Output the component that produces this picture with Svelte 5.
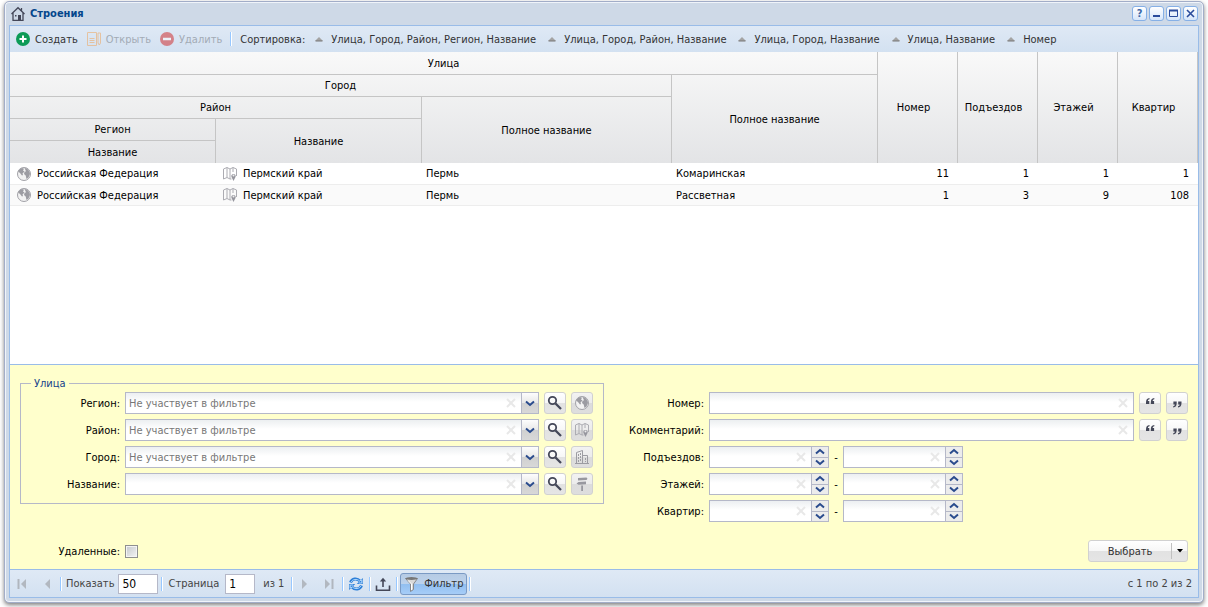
<script lang="ts">
  type Building = {
    region: string;
    district: string;
    city: string;
    street: string;
    counts: number[];
  };

  const sortings = [
    'Улица, Город, Район, Регион, Название',
    'Улица, Город, Район, Название',
    'Улица, Город, Название',
    'Улица, Название',
    'Номер'
  ];
  const countColumns = ['Номер', 'Подъездов', 'Этажей', 'Квартир'];
  const rows: Building[] = [
    { region: 'Российская Федерация', district: 'Пермский край', city: 'Пермь', street: 'Комаринская', counts: [11, 1, 1, 1] },
    { region: 'Российская Федерация', district: 'Пермский край', city: 'Пермь', street: 'Рассветная', counts: [1, 3, 9, 108] }
  ];

  const combos = [
    { id: 'region', label: 'Регион', empty: 'Не участвует в фильтре', icon: 'globe' },
    { id: 'district', label: 'Район', empty: 'Не участвует в фильтре', icon: 'map' },
    { id: 'city', label: 'Город', empty: 'Не участвует в фильтре', icon: 'city' },
    { id: 'street', label: 'Название', empty: '', icon: 'sign' }
  ];
  const texts = [
    { id: 'number', label: 'Номер' },
    { id: 'comment', label: 'Комментарий' }
  ];
  const ranges = [
    { id: 'entrances', label: 'Подъездов' },
    { id: 'floors', label: 'Этажей' },
    { id: 'flats', label: 'Квартир' }
  ];

  let filterText = $state<Record<string, string>>({ number: '', comment: '' });
  let filterRange = $state<Record<string, string>>({});
  let removed = $state(false);
  let showFilter = $state(true);
  let pageSize = $state('50');
  let page = $state('1');

  function step(key: string, delta: number) {
    const next = Math.max(0, (Number(filterRange[key]) || 0) + delta);
    filterRange[key] = String(next);
  }
</script>

{#snippet icon(name: string)}
  <svg class="icon" width="16" height="16" viewBox="0 0 16 16" fill="none" aria-hidden="true">
    {#if name === 'home'}
      <path d="M1.500 8 8 1.700 14.500 8M3 7v7.300h10V7M11.500 2v3" stroke="#444758" stroke-width="1.300" />
      <path d="M8 9h3v5H8zM5 9h1.500v1.500H5z" fill="#444758" />
    {:else if name === 'add'}
      <circle cx="8" cy="8" r="7" fill="#0d9b57" />
      <path d="M8 4.500v7M4.500 8h7" stroke="#fff" stroke-width="2" />
    {:else if name === 'open'}
      <path d="M1.500 1.500h9v13h-9zM3.500 7.500h5M3.500 9.500h5M3.500 11.500h5" stroke="#f0a050" />
      <path d="M12 2h2.500v10l-1.200 2L12 12z" stroke="#f0a050" />
    {:else if name === 'remove'}
      <circle cx="8" cy="8" r="7" fill="#d02020" />
      <path d="M4 8h8" stroke="#fff" stroke-width="2.500" />
    {:else if name === 'asc'}
      <path d="M4 10 8 6l4 4z" fill="#a4a4a4" />
      <path d="M4.500 10h7" stroke="#777" />
    {:else if name === 'globe'}
      <circle cx="8" cy="8" r="6.500" fill="#f2f2f2" stroke="#a2a2a8" />
      <path d="M2 5.500C3 3.500 4.500 2.500 6 2l2 .8L7 4.500 8.500 5.500 6.500 7.500l.5 1.500-1 .5-2-2.500zM8.500 2 11 2.500l2.500 3L14 8l-1.500 3.500-2 1.500-.8-3.500L8 8l.5-2 1.500-.8z" fill="#9c9ca2" />
    {:else if name === 'map'}
      <path d="M1.500 3 5 1.500 8 3l3-1.500L14.500 3v7M1.500 3v10L5 11.500 8 13h1.500M5 1.500v10M8 3v10M11 1.500V6" stroke="#acacb2" />
      <path d="M11.500 15 9.500 11a2.200 2.200 0 1 1 4 0z" fill="#96969e" />
      <circle cx="11.500" cy="9.500" r="1" fill="#eee" />
    {:else if name === 'city'}
      <path d="M2.500 14.500V3.500L8.500 1.500v13M8.500 6.500h5v8M1 14.500h14" stroke="#9c9ca2" />
      <path d="M4.500 5v8M6.500 4v9M11.500 9v4" stroke="#9c9ca2" stroke-dasharray="2 1" />
    {:else if name === 'sign'}
      <path d="M4 2 12.500 1.500 13.500 2.700 12.500 4 4 4.500zM12 5.500 4.500 6 2.500 7.500l2 1.200L12 8.200zM7.200 9.500h1.800V15H7.200z" fill="#98989f" />
    {:else if name === 'search'}
      <circle cx="5.500" cy="5.500" r="3.700" stroke="#444758" stroke-width="1.800" />
      <path d="m8.500 8.500 5.500 5.500" stroke="#444758" stroke-width="2.300" />
    {:else if name === 'open-quote'}
      <path d="M7.500 3C5 3.200 4 4.700 4 7.500V9h3.300V6H5.900c0-1 .5-1.500 1.600-1.700zM12.300 3C9.800 3.200 8.800 4.700 8.800 7.500V9h3.300V6h-1.400c0-1 .5-1.500 1.600-1.700z" fill="#444758" />
    {:else if name === 'close-quote'}
      <path d="M4.200 12.500c2.500-.2 3.500-1.700 3.500-4.500V6.500H4.400v3h1.400c0 1-.5 1.500-1.600 1.700zM9 12.500c2.500-.2 3.500-1.700 3.500-4.500V6.500H9.200v3h1.400c0 1-.5 1.500-1.600 1.700z" fill="#444758" />
    {:else if name === 'first'}
      <path d="M3.500 3v10" stroke="#b0b6be" stroke-width="2" />
      <path d="M11 3v10L6 8z" fill="#b2b8c0" />
    {:else if name === 'prev'}
      <path d="M11 3v10L6 8z" fill="#b2b8c0" />
    {:else if name === 'next'}
      <path d="M5 3v10l5-5z" fill="#b2b8c0" />
    {:else if name === 'last'}
      <path d="M11.500 3v10" stroke="#b0b6be" stroke-width="2" />
      <path d="M4 3v10l5-5z" fill="#b2b8c0" />
    {:else if name === 'refresh'}
      <path d="M2.500 6.500C4 2.500 9 1.800 12 5M13.500 9.500C12 13.500 7 14.200 4 11" stroke="#2c7fd8" stroke-width="3" />
      <path d="M14.800 2v6H8.800zM1.200 14V8h6z" fill="#2c7fd8" />
      <path d="M3 6.200C4.500 3 9 2.500 11.500 5L13.800 4v3h-3M13 9.800C11.500 13 7 13.500 4.500 11L2.200 12V9h3" stroke="#b5dafc" />
    {:else if name === 'export'}
      <path d="M1.500 9.500v4.700h13V9.500M8 11V4" stroke="#444758" stroke-width="1.600" />
      <path d="M4.800 5.500 8 1.800l3.200 3.700z" fill="#444758" />
    {:else if name === 'funnel'}
      <path d="M1.500 2.500h12L9.500 8v5.500l-3 2V8z" fill="#d8d8d8" stroke="#85888c" />
      <ellipse cx="7.500" cy="2.500" rx="6" ry="1.500" fill="#777" />
      <path d="M4 4.500 7.500 8v6" stroke="#fff" />
    {/if}
  </svg>
{/snippet}

{#snippet chevron(up: boolean)}
  <svg width="10" height="7" viewBox="0 0 10 7" fill="none" aria-hidden="true">
    <path d={up ? 'M1 5.500 5 2l4 3.500' : 'M1 1.500 5 5l4-3.500'} stroke="#2a4b8d" stroke-width="2" />
  </svg>
{/snippet}

{#snippet clear()}
  <button type="button" class="clear" aria-label="Очистить">
    <svg width="10" height="10" viewBox="0 0 10 10"><path d="m1 1 8 8m0-8L1 9" stroke="#e8e8e8" stroke-width="2" /></svg>
  </button>
{/snippet}

{#snippet spinner(key: string, label: string)}
  <div class="field spinner">
    <input id={key} aria-label={label} inputmode="numeric" bind:value={filterRange[key]} />
    {@render clear()}
    <div class="spin">
      <button type="button" aria-label="Больше" onclick={() => step(key, 1)}>{@render chevron(true)}</button>
      <button type="button" aria-label="Меньше" onclick={() => step(key, -1)}>{@render chevron(false)}</button>
    </div>
  </div>
{/snippet}

<main class="window">
  <header class="title">
    {@render icon('home')}
    <h1>Строения</h1>
    <div class="tools">
      <button type="button" aria-label="Справка"><b>?</b></button>
      <button type="button" aria-label="Свернуть">
        <svg width="13" height="13"><path d="M3 9h7" stroke="#2a4b9b" stroke-width="2" /></svg>
      </button>
      <button type="button" aria-label="Развернуть">
        <svg width="13" height="13" fill="none"><path d="M2.500 3v6.500h8V3" stroke="#2a4b9b" /><path d="M2 3.500h9" stroke="#2a4b9b" stroke-width="2" /></svg>
      </button>
      <button type="button" aria-label="Закрыть">
        <svg width="13" height="13"><path d="m3 3 7 7m0-7-7 7" stroke="#2a4b9b" stroke-width="1.600" /></svg>
      </button>
    </div>
  </header>

  <div class="content">
    <div class="toolbar top">
      <button type="button" class="tool">{@render icon('add')}Создать</button>
      <button type="button" class="tool" disabled>{@render icon('open')}Открыть</button>
      <button type="button" class="tool" disabled>{@render icon('remove')}Удалить</button>
      <span class="sep"></span>
      <span class="caption">Сортировка:</span>
      {#each sortings as sorting}
        <button type="button" class="tool">{@render icon('asc')}{sorting}</button>
      {/each}
    </div>

    <div class="grid">
      <table>
        <colgroup>
          <col class="w-name" />
          <col class="w-name" />
          <col class="w-city" />
          <col class="w-name" />
          <col class="w-count" span="4" />
        </colgroup>
        <thead>
          <tr>
            <th colspan="4">Улица</th>
            {#each countColumns as column}
              <th rowspan="5" class="count">{column}</th>
            {/each}
          </tr>
          <tr>
            <th colspan="3">Город</th>
            <th rowspan="4">Полное название</th>
          </tr>
          <tr>
            <th colspan="2">Район</th>
            <th rowspan="3">Полное название</th>
          </tr>
          <tr>
            <th>Регион</th>
            <th rowspan="2">Название</th>
          </tr>
          <tr>
            <th>Название</th>
          </tr>
        </thead>
        <tbody>
          {#each rows as row}
            <tr>
              <td><div class="place">{@render icon('globe')}{row.region}</div></td>
              <td><div class="place">{@render icon('map')}{row.district}</div></td>
              <td>{row.city}</td>
              <td>{row.street}</td>
              {#each row.counts as count}
                <td class="num">{count}</td>
              {/each}
            </tr>
          {/each}
        </tbody>
      </table>
    </div>

    {#if showFilter}
      <form class="filter" onsubmit={(e) => e.preventDefault()}>
        <div class="columns">
          <fieldset>
            <legend>Улица</legend>
            {#each combos as combo}
              <div class="row">
                <label for={combo.id}>{combo.label}:</label>
                <div class="field">
                  <select id={combo.id}>
                    <option value="">{combo.empty}</option>
                  </select>
                  {@render clear()}
                  <span class="trigger">{@render chevron(false)}</span>
                </div>
                <button type="button" class="square" aria-label="Найти">{@render icon('search')}</button>
                <button type="button" class="square off" aria-label={combo.label} disabled>{@render icon(combo.icon)}</button>
              </div>
            {/each}
          </fieldset>

          <div class="right">
            {#each texts as text}
              <div class="row">
                <label for={text.id}>{text.label}:</label>
                <div class="field">
                  <input id={text.id} bind:value={filterText[text.id]} />
                  {@render clear()}
                </div>
                <button type="button" class="square" aria-label="Начинается с">{@render icon('open-quote')}</button>
                <button type="button" class="square" aria-label="Заканчивается на">{@render icon('close-quote')}</button>
              </div>
            {/each}
            {#each ranges as range}
              <div class="row">
                <label for="{range.id}-from">{range.label}:</label>
                {@render spinner(`${range.id}-from`, `${range.label} от`)}
                <span class="dash">-</span>
                {@render spinner(`${range.id}-to`, `${range.label} до`)}
              </div>
            {/each}
          </div>
        </div>

        <div class="footer">
          <label for="removed">Удаленные:</label>
          <input id="removed" type="checkbox" bind:checked={removed} />
          <div class="split">
            <button type="submit">Выбрать</button>
            <button type="button" class="arrow" aria-label="Ещё">
              <svg width="6" height="4" viewBox="0 0 6 4"><path d="M0 0h6L3 3.500z" fill="#000" /></svg>
            </button>
          </div>
        </div>
      </form>
    {/if}

    <div class="toolbar paging">
      <button type="button" class="nav" aria-label="Первая страница" disabled>{@render icon('first')}</button>
      <button type="button" class="nav" aria-label="Предыдущая страница" disabled>{@render icon('prev')}</button>
      <span class="sep"></span>
      <label for="page-size">Показать</label>
      <input id="page-size" class="size" bind:value={pageSize} />
      <span class="sep"></span>
      <label for="page">Страница</label>
      <input id="page" class="page" bind:value={page} />
      <span class="of">из 1</span>
      <span class="sep"></span>
      <button type="button" class="nav" aria-label="Следующая страница" disabled>{@render icon('next')}</button>
      <button type="button" class="nav" aria-label="Последняя страница" disabled>{@render icon('last')}</button>
      <span class="sep"></span>
      <button type="button" class="nav" aria-label="Обновить">{@render icon('refresh')}</button>
      <span class="sep"></span>
      <button type="button" class="nav" aria-label="Выгрузить">{@render icon('export')}</button>
      <span class="sep"></span>
      <button type="button" class="toggle" aria-pressed={showFilter} onclick={() => (showFilter = !showFilter)}>
        {@render icon('funnel')}Фильтр
      </button>
      <span class="sep"></span>
      <span class="status">с 1 по 2 из 2</span>
    </div>
  </div>
</main>

<style>
  :global(body) {
    margin: 0;
    background: #fff;
  }

  .window {
    box-sizing: border-box;
    display: flex;
    flex-direction: column;
    min-height: calc(100vh - 5px);
    margin: 1px 4px 4px;
    padding: 0 4px 4px;
    border: 1px solid #a2adc8;
    border-radius: 5px;
    background: #ced9e7;
    box-shadow:
      inset 0 0 0 1px #f0f4fa,
      0 2px 4px rgba(0, 0, 0, 0.5);
    font: 11px/15px 'DejaVu Sans Condensed', 'DejaVu Sans', sans-serif;
    color: #000;
  }
  .window * {
    box-sizing: border-box;
  }
  .icon {
    flex: none;
    display: block;
  }
  button,
  input,
  select {
    margin: 0;
    padding: 0;
    border: 0;
    background: none;
    font: inherit;
    color: inherit;
  }
  button {
    display: flex;
    align-items: center;
    justify-content: center;
  }

  .title {
    display: flex;
    align-items: center;
    gap: 4px;
    height: 23px;
    padding: 0 1px;
  }
  h1 {
    margin: 0;
    font-size: 11px;
    line-height: 15px;
    color: #04468c;
  }
  .tools {
    display: flex;
    gap: 2px;
    margin-left: auto;
  }
  .tools button {
    width: 15px;
    height: 15px;
    border: 1px solid #86b0e6;
    border-radius: 3px;
    background: linear-gradient(#fff, #d5e5fa);
    color: #3c69a8;
  }

  .content {
    flex: 1;
    display: flex;
    flex-direction: column;
    border: 1px solid #99bce8;
  }
  .toolbar {
    display: flex;
    align-items: center;
    background: linear-gradient(#dfe9f5, #d3e1f1);
    color: #333;
    white-space: nowrap;
  }
  .top {
    height: 26px;
    padding-left: 5px;
  }
  .tool {
    gap: 4px;
    margin-right: 8px;
  }
  .tool:disabled {
    color: #a3abb5;
  }
  .tool:disabled .icon {
    opacity: 0.5;
  }
  .sep {
    flex: none;
    width: 2px;
    height: 14px;
    border-left: 1px solid #98c8ff;
    border-right: 1px solid #fff;
  }
  .caption {
    margin: 0 6px 0 8px;
  }

  .grid {
    flex: 1;
    min-height: 240px;
    background: #fff;
  }
  table {
    width: 100%;
    table-layout: fixed;
    border-collapse: separate;
    border-spacing: 0;
  }
  .w-name {
    width: 206px;
  }
  .w-city {
    width: 250px;
  }
  .w-count {
    width: 80px;
  }
  thead {
    background: linear-gradient(#f9f9f9, #e3e4e6);
  }
  th {
    height: 22px;
    padding: 0;
    border: solid #c5c5c5;
    border-width: 0 1px 1px 0;
    font-weight: normal;
  }
  thead tr:first-child th {
    height: 23px;
  }
  .count,
  th[rowspan],
  tr:last-child th {
    border-bottom: 0;
  }
  .count {
    padding-right: 8px;
  }
  td {
    height: 21px;
    padding: 0 4px;
    border-bottom: 1px solid #ededed;
  }
  tbody tr:first-child td {
    height: 22px;
  }
  tbody tr:nth-child(even) {
    background: #fafafa;
  }
  .place {
    display: flex;
    align-items: center;
    gap: 5px;
    padding-left: 2px;
  }
  .num {
    padding-right: 9px;
    text-align: right;
  }

  .filter {
    padding: 11px 10px 7px;
    border-top: 1px solid #99bce8;
    border-bottom: 1px solid #99bce8;
    background: #ffc;
  }
  .columns {
    display: grid;
    grid-template-columns: 1fr 1fr;
  }
  fieldset {
    align-self: start;
    min-width: 0;
    margin: 0;
    padding: 1px 10px 3px;
    border: 1px solid #b5b8c8;
  }
  legend {
    padding: 0 3px;
    color: #15428b;
  }
  .right {
    padding-top: 16px;
  }
  .row {
    display: flex;
    align-items: center;
    gap: 5px;
    margin-bottom: 5px;
  }
  .row label,
  .footer label {
    flex: none;
    width: 100px;
    text-align: right;
  }
  fieldset .row label {
    width: 89px;
  }
  .field {
    flex: 1;
    display: flex;
    min-width: 0;
    height: 22px;
    border: 1px solid #b5b8c8;
    background: linear-gradient(#eceff1, #fff 9px);
  }
  .field input,
  .field select {
    flex: 1;
    min-width: 0;
    padding: 0 3px;
    appearance: none;
    color: #777;
  }
  .field input {
    color: #000;
  }
  .clear {
    flex: none;
    width: 20px;
  }
  .trigger {
    display: flex;
    align-items: center;
    justify-content: center;
    width: 17px;
    border-left: 1px solid #b5b8c8;
    background: linear-gradient(#fdfdfd, #e8e8e8 50%, #d0d0d0 50%, #d8d8d8);
    pointer-events: none;
  }
  .spinner {
    flex: none;
    width: 120px;
  }
  .spin {
    display: flex;
    flex-direction: column;
    width: 17px;
    border-left: 1px solid #b5b8c8;
    background: #ececec;
  }
  .spin button {
    flex: 1;
  }
  .spin button + button {
    border-top: 1px solid #b5b8c8;
  }
  .dash {
    width: 4px;
    text-align: center;
  }
  .square {
    flex: none;
    width: 22px;
    height: 22px;
    border: 1px solid #d1d1d1;
    border-radius: 3px;
    background: linear-gradient(#fff, #f7f7f7 48%, #e2e2e2 52%, #e5e5e5);
  }
  .off {
    background: linear-gradient(#f2f2f2, #ececec 48%, #dcdcdc 52%, #dedede);
  }

  .footer {
    display: flex;
    align-items: center;
    gap: 5px;
    margin-top: 13px;
  }
  .footer input {
    width: 13px;
    height: 13px;
    appearance: none;
    border: 1px solid #8e8f8f;
    background: linear-gradient(135deg, #c4c8cc, #f4f4f4);
    box-shadow: inset 0 0 0 1px #f4f4f4;
  }
  .footer input:checked {
    background: #5a7fb5;
  }
  .split {
    display: flex;
    align-items: center;
    width: 100px;
    height: 22px;
    margin-left: auto;
    border: 1px solid #d1d1d1;
    border-radius: 3px;
    background: linear-gradient(#fff, #f7f7f7 48%, #e2e2e2 52%, #e5e5e5);
    color: #333;
  }
  .split button {
    flex: 1;
    height: 16px;
  }
  .split .arrow {
    flex: none;
    width: 16px;
    border-left: 1px solid #c0c0c0;
  }

  .paging {
    height: 27px;
    padding: 0 6px 0 1px;
    color: #444;
  }
  .paging label {
    margin: 0 4px;
  }
  .paging .sep + label[for='page'] {
    margin: 0 6px 0 5px;
  }
  .paging input {
    height: 20px;
    padding: 0 3px;
    border: 1px solid #b5b8c8;
    background: #fff;
    font-size: 12px;
    color: #000;
  }
  .size {
    width: 40px;
    margin-right: 3px;
  }
  .page {
    width: 30px;
  }
  .of {
    margin: 0 7px 0 8px;
  }
  .nav {
    width: 24px;
    height: 22px;
  }
  .nav + .sep {
    margin-left: 1px;
  }
  .toggle {
    gap: 4px;
    width: 67px;
    height: 22px;
    margin: 0 2px;
    border: 1px solid #7a9ac4;
    border-radius: 3px;
    color: #333;
  }
  .toggle[aria-pressed='true'] {
    background: linear-gradient(#b6cbe4, #bcd2ec 48%, #92bff0 52%, #a6cdf8);
  }
  .status {
    margin-left: auto;
  }
</style>
